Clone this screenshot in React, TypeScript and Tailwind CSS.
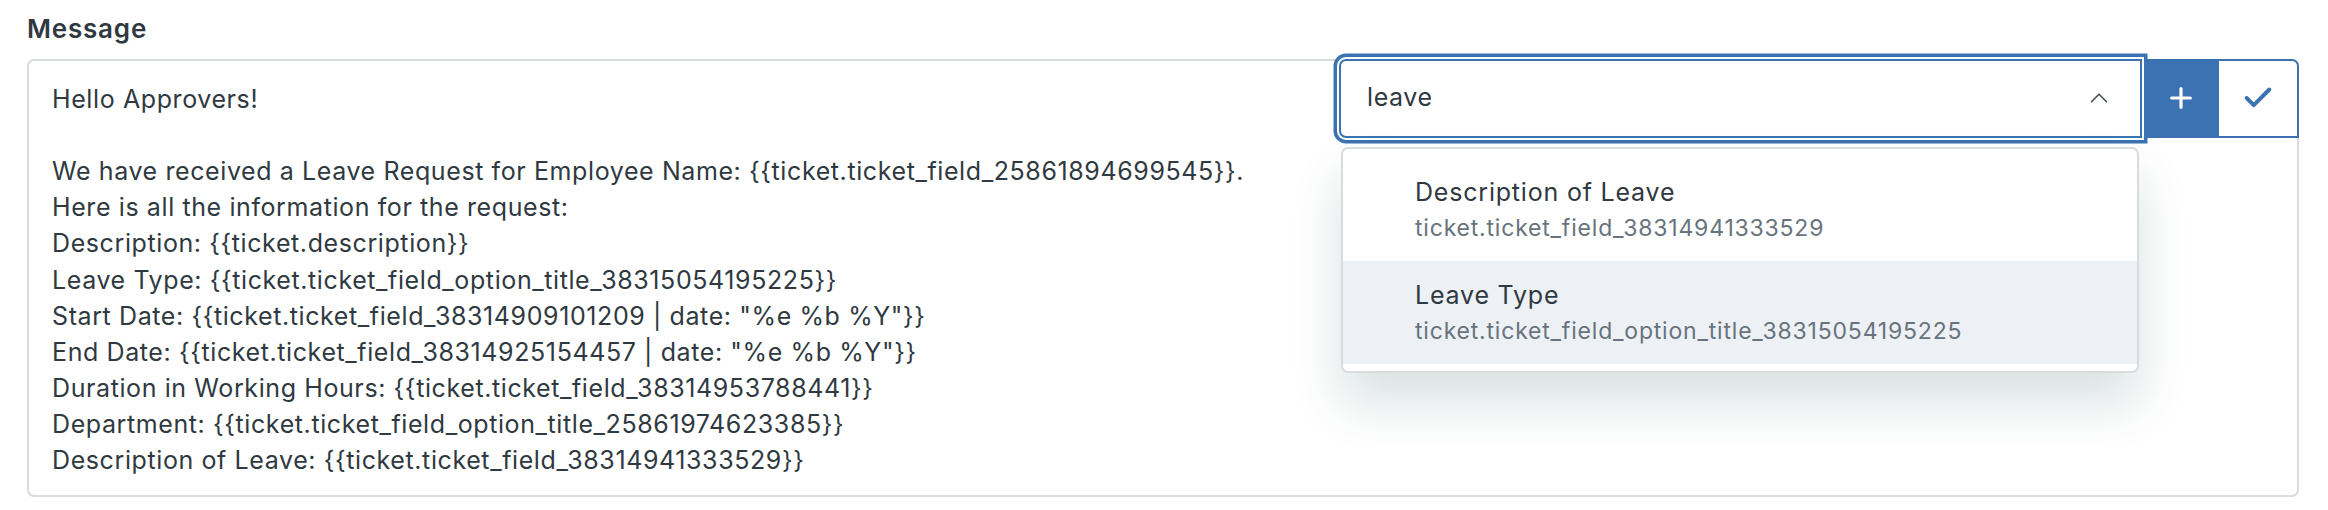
import { ChevronUp, Plus, Check } from 'lucide-react';

const messageLines = [
  'Hello Approvers!',
  '',
  'We have received a Leave Request for Employee Name: {{ticket.ticket_field_25861894699545}}.',
  'Here is all the information for the request:',
  'Description: {{ticket.description}}',
  'Leave Type: {{ticket.ticket_field_option_title_38315054195225}}',
  'Start Date: {{ticket.ticket_field_38314909101209 | date: "%e %b %Y"}}',
  'End Date: {{ticket.ticket_field_38314925154457 | date: "%e %b %Y"}}',
  'Duration in Working Hours: {{ticket.ticket_field_38314953788441}}',
  'Department: {{ticket.ticket_field_option_title_25861974623385}}',
  'Description of Leave: {{ticket.ticket_field_38314941333529}}',
];

const suggestions = [
  { title: 'Description of Leave', path: 'ticket.ticket_field_38314941333529' },
  { title: 'Leave Type', path: 'ticket.ticket_field_option_title_38315054195225', active: true },
];

export default function App() {
  return (
    <div
      className="w-[2328px] h-[510px] bg-white text-[#2f3941] pl-[27px] pr-[29px] pt-[11px] tracking-[0.6px]"
      style={{ fontFamily: 'Inter, "Noto Sans", sans-serif' }}
    >
      <label className="block text-[26px] leading-[35.6px] font-semibold tracking-[0.8px]">Message</label>

      <div className="relative mt-[12px] border-2 border-[#d8dcde] rounded-[7px] pl-[23px] pt-[20px] pb-[16px]">
        {messageLines.map((line, i) => (
          <div key={i} className="text-[25px] leading-[36.2px] h-[36.2px] whitespace-pre">
            {line}
          </div>
        ))}

        {/* placeholder toolbar */}
        <div className="absolute top-[-2px] right-[-2px] flex h-[79px]">
          <div className="relative w-[803px] h-full z-10">
            <div className="flex items-center h-full border-2 border-[#3b72b2] rounded-l-[7px] bg-white pl-[26px] pr-[26px] shadow-[0_0_0_2px_#fff,0_0_0_5.5px_#3b72b2]">
              <span className="flex-1 text-[25px]">leave</span>
              <ChevronUp className="w-[30px] h-[30px] text-[#49545c]" strokeWidth={1.4} />
            </div>

            {/* suggestion menu */}
            <div className="absolute left-[2px] right-[3px] top-[calc(100%+9px)] bg-white border-2 border-[#d8dcde] rounded-[7px] pt-[9px] pb-[7px] shadow-[0_30px_50px_rgba(23,73,77,0.16)]">
              {suggestions.map((s) => (
                <div
                  key={s.path}
                  className={`h-[103px] pl-[72px] pt-[17px] ${s.active ? 'bg-[#edf1f5]' : ''}`}
                >
                  <div className="text-[25px] leading-[35px] tracking-[0.8px]">{s.title}</div>
                  <div className="text-[23px] leading-[36px] text-[#68737d] tracking-[0.8px]">{s.path}</div>
                </div>
              ))}
            </div>
          </div>
          <button className="w-[77px] h-full bg-[#3b72b2] flex items-center justify-center">
            <Plus className="w-[32px] h-[32px] text-white" strokeWidth={2.4} />
          </button>
          <button className="w-[80px] h-full bg-white border-2 border-l-0 border-[#3b72b2] rounded-tr-[7px] flex items-center justify-center">
            <Check className="w-[34px] h-[34px] text-[#3b72b2]" strokeWidth={2.8} />
          </button>
        </div>
      </div>
    </div>
  );
}
